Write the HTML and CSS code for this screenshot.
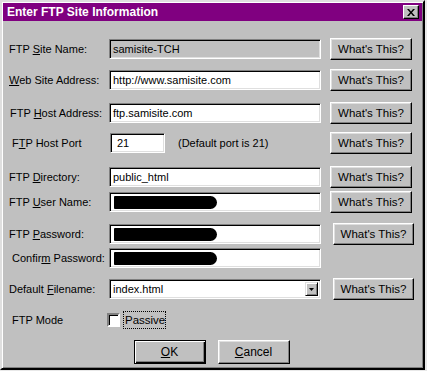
FILE: index.html
```html
<!DOCTYPE html>
<html>
<head>
<meta charset="utf-8">
<link rel="stylesheet" href="styles.css">
</head>
<body>
<div class="window">
  <div class="titlebar">
    <span class="title">Enter FTP Site Information</span>
    <span class="close">
      <svg width="8" height="7" viewBox="0 0 8 7"><path d="M0 0h2l2 2.5 2-2.5h2l-3 3.5 3 3.5h-2l-2-2.5-2 2.5h-2l3-3.5z" fill="#000"/></svg>
    </span>
  </div>
  <div class="content">
    <div class="row r1">
      <span class="label">FTP <u>S</u>ite Name:</span>
      <span class="field disabled">samisite-TCH</span>
      <span class="btn help">What's This?</span>
    </div>
    <div class="row r2">
      <span class="label"><u>W</u>eb Site Address:</span>
      <span class="field">http://www.samisite.com</span>
      <span class="btn help">What's This?</span>
    </div>
    <div class="row r3">
      <span class="label ind1">FTP <u>H</u>ost Address:</span>
      <span class="field">ftp.samisite.com</span>
      <span class="btn help">What's This?</span>
    </div>
    <div class="row r4">
      <span class="label ind3">F<u>T</u>P Host Port</span>
      <span class="fieldcol">
        <span class="field port">21</span>
        <span class="hint">(Default port is 21)</span>
      </span>
      <span class="btn help">What's This?</span>
    </div>
    <div class="row r5">
      <span class="label">FTP <u>D</u>irectory:</span>
      <span class="field">public_html</span>
      <span class="btn help">What's This?</span>
    </div>
    <div class="row r6">
      <span class="label">FTP <u>U</u>ser Name:</span>
      <span class="field"><span class="blob"></span></span>
      <span class="btn help">What's This?</span>
    </div>
    <div class="row r7">
      <span class="label">FTP <u>P</u>assword:</span>
      <span class="field"><span class="blob"></span></span>
      <span class="btn help far">What's This?</span>
    </div>
    <div class="row r8">
      <span class="label ind3">Confir<u>m</u> Password:</span>
      <span class="field"><span class="blob"></span></span>
    </div>
    <div class="row r9">
      <span class="label">Default <u>F</u>ilename:</span>
      <span class="field select"><span class="seltext">index.html</span><span class="arrow"><svg width="5" height="3" viewBox="0 0 5 3"><path d="M0 0h5l-2.5 3z" fill="#000"/></svg></span></span>
      <span class="btn help far">What's This?</span>
    </div>
    <div class="row r10">
      <span class="label ind3">FTP Mode</span>
      <span class="check"></span>
      <span class="focus">Passive</span>
    </div>
    <div class="actions">
      <span class="btn big default"><u>O</u>K</span>
      <span class="btn big"><u>C</u>ancel</span>
    </div>
  </div>
</div>
</body>
</html>
```
FILE: styles.css
```css
html, body {
  margin: 0;
  padding: 0;
  background: #e8e8e8;
}
body {
  font-family: "Liberation Sans", Arial, sans-serif;
  font-size: 11px;
  color: #000;
}
.window {
  width: 419px;
  height: 364px;
  background: #c0c0c0;
  border: 2px solid;
  border-color: #dfdfdf #000 #000 #dfdfdf;
  box-shadow: inset 1px 1px #fff, inset -1px -1px #808080;
  padding: 1px;
  box-sizing: content-box;
}
.titlebar {
  height: 18px;
  background: #800080;
  display: flex;
  align-items: center;
  justify-content: space-between;
  padding: 0 3px 0 4px;
}
.title {
  color: #fff;
  font-weight: bold;
  font-size: 12px;
}
.close {
  width: 14px;
  height: 12px;
  background: #c0c0c0;
  border: 1px solid;
  border-color: #fff #000 #000 #fff;
  box-shadow: inset -1px -1px #808080;
  display: flex;
  align-items: center;
  justify-content: center;
}
.content {
  padding: 0 0 0 6px;
  display: flex;
  flex-direction: column;
}
.row {
  height: 22px;
  display: flex;
  align-items: center;
}
.r1 { margin-top: 17px; }
.r2 { margin-top: 9px; }
.r3 { margin-top: 11px; }
.r4 { margin-top: 8px; }
.r5 { margin-top: 12px; }
.r6 { margin-top: 3px; }
.r7 { margin-top: 10px; }
.r8 { margin-top: 2px; }
.r9 { margin-top: 9px; }
.r10 { margin-top: 9px; }
.label {
  width: 100px;
  white-space: nowrap;
}
.ind1 { padding-left: 1px; width: 99px; }
.ind3 { padding-left: 3px; width: 97px; }
.field {
  width: 212px;
  height: 20px;
  box-sizing: border-box;
  background: #fff;
  border: 1px solid;
  border-color: #808080 #fff #fff #808080;
  box-shadow: inset 1px 1px #000, inset -1px -1px #dfdfdf;
  padding: 1px 2px 1px 3px;
  display: flex;
  align-items: center;
  white-space: nowrap;
  font-size: 11px;
}
.field.disabled {
  background: #c0c0c0;
}
.fieldcol {
  width: 212px;
  display: flex;
  align-items: center;
}
.field.port {
  width: 55px;
  margin-left: 1px;
  padding-left: 6px;
}
.hint {
  margin-left: 13px;
  white-space: nowrap;
}
.blob {
  display: block;
  width: 103px;
  height: 13px;
  background: #000;
  border-radius: 1px 7px 7px 1px;
  margin-left: 1px;
}
.btn {
  background: #c0c0c0;
  border: 1px solid;
  border-color: #fff #000 #000 #fff;
  box-shadow: inset -1px -1px #808080, inset 1px 1px #dfdfdf;
  display: flex;
  align-items: center;
  justify-content: center;
  white-space: nowrap;
  box-sizing: border-box;
}
.help {
  width: 82px;
  height: 22px;
  margin-left: 9px;
  font-size: 11.5px;
}
.help.far {
  margin-left: 12px;
  width: 81px;
}
.select {
  justify-content: space-between;
  padding-right: 2px;
}
.arrow {
  width: 13px;
  height: 14px;
  box-sizing: border-box;
  background: #c0c0c0;
  border: 1px solid;
  border-color: #dfdfdf #000 #000 #dfdfdf;
  box-shadow: inset 1px 1px #fff, inset -1px -1px #808080;
  display: flex;
  align-items: center;
  justify-content: center;
}
.check {
  width: 9px;
  height: 10px;
  margin-left: -2px;
  background: #fff;
  border: 2px solid;
  border-color: #808080 #fff #fff #808080;
  box-shadow: inset 1px 1px #000;
}
.focus {
  margin-left: 3px;
  padding: 2px 0 2px 1px;
  border: 1px dotted #000;
  font-size: 11.5px;
}
.actions {
  margin-top: 9px;
  display: flex;
  justify-content: center;
  gap: 12px;
  padding-right: 8px;
}
.big {
  width: 72px;
  height: 24px;
  font-size: 12px;
}
.default {
  border: 1px solid #000;
  box-shadow: inset 1px 1px #fff, inset -1px -1px #000, inset -2px -2px #808080;
}
```
